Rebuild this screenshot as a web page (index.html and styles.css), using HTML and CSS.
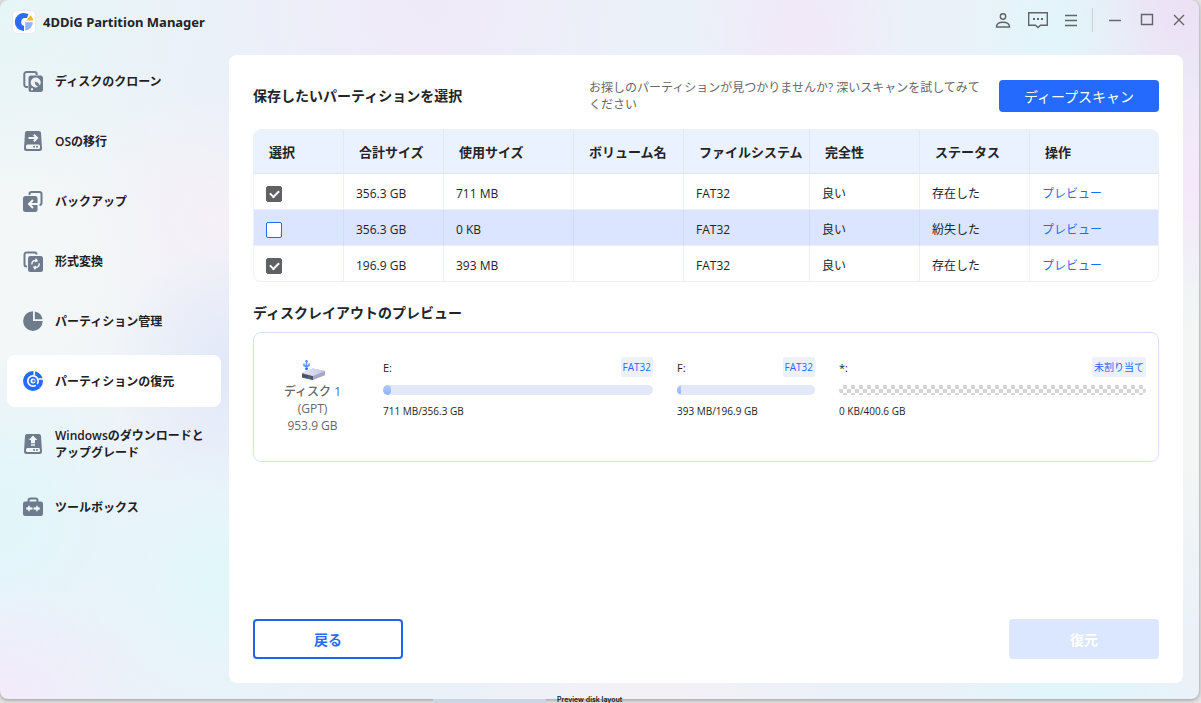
FILE: index.html
```html
<!DOCTYPE html>
<html lang="ja">
<head>
<meta charset="utf-8">
<meta name="viewport" content="width=device-width, initial-scale=1">
<title>4DDiG Partition Manager</title>
<link rel="stylesheet" href="styles.css">
</head>
<body>
<div class="window">
  <header class="titlebar">
    <svg class="logo" viewBox="0 0 24 24" aria-hidden="true">
      <rect x="0.5" y="0.5" width="23" height="23" rx="4" fill="#fdfdff" stroke="#ece9f2"/>
      <path d="M13 3.200a8.900 8.900 0 1 0-1 17.700v-5a4 4 0 0 1 .8-7.800h2.200l1.500-4.200z" fill="#2b6cf6"/>
      <path d="M13.200 12.200h7.600a8.500 8.500 0 0 1-7.600 8.400z" fill="#91b6fb"/>
      <path d="M14.500 10.500l3.800-5.300a8 8 0 0 1 2.900 5.300z" fill="#fbb61c"/>
    </svg>
    <h1 class="app-name">4DDiG Partition Manager</h1>
    <div class="title-actions">
      <button class="icon-button" aria-label="アカウント"><svg viewBox="0 0 20 20"><circle cx="10" cy="6.500" r="2.700"/><path d="M3.500 17c0-3.200 2.300-4.800 6.500-4.800s6.500 1.600 6.500 4.800z"/></svg></button>
      <button class="icon-button feedback" aria-label="フィードバック"><svg viewBox="0 0 20 20"><path d="M.7 2.700h18.600v12.600h-6.800L10 17.500l-2.500-2.200H.7z"/><path class="dots" d="M5 9h2M9 9h2M13 9h2"/></svg></button>
      <button class="icon-button" aria-label="メニュー"><svg viewBox="0 0 20 20"><path d="M4 5.500h12M4 10.500h12M4 15.500h12"/></svg></button>
      <span class="divider"></span>
      <button class="icon-button wide" aria-label="最小化"><svg viewBox="0 0 20 20"><path d="M4 10.500h12"/></svg></button>
      <button class="icon-button wide" aria-label="最大化"><svg viewBox="0 0 20 20"><path d="M4.500 4.500h11v10h-11z"/></svg></button>
      <button class="icon-button wide" aria-label="閉じる"><svg viewBox="0 0 20 20"><path d="M5 5l10 10M15 5L5 15"/></svg></button>
    </div>
  </header>

  <div class="body">
    <nav class="sidebar">
      <a class="nav-item" href="#clone">
        <svg viewBox="0 0 20 20"><path class="line" d="M5 16H3.500a2.200 2.200 0 0 1-2.200-2.200V3.200A2.200 2.200 0 0 1 3.500 1h8a2.200 2.200 0 0 1 2.200 2.200V4"/><rect x="5.500" y="4.500" width="14.500" height="16.500" rx="2.500"/><circle cx="12.700" cy="11.500" r="5" fill="#eef2f5"/><path d="M11.500 10.500l3.500 1.200 3.500 5.300-1.200 1-4.800-4.500z"/><path class="cut" d="M8 18.300h2"/></svg>
        <span>ディスクのクローン</span></a>
      <a class="nav-item" href="#migrate">
        <svg viewBox="0 0 20 20"><path d="M4 0h12a2 2 0 0 1 2 1.700L19 17.500a2.500 2.500 0 0 1-2.500 2.500h-13A2.500 2.500 0 0 1 1 17.500L2 1.700A2 2 0 0 1 4 0z"/><path class="cut" d="M5.500 7h8.500M10.800 3.700L14.200 7l-3.400 3.300"/><rect x="3" y="13.500" width="14" height="4.500" rx="1.500" fill="#f4f6f8"/><circle cx="11" cy="15.700" r="1"/><circle cx="14" cy="15.700" r="1"/></svg>
        <span>OSの移行</span></a>
      <a class="nav-item" href="#backup">
        <svg viewBox="0 0 20 20"><path class="line" d="M6.500 4V3a2 2 0 0 1 2-2h8a2 2 0 0 1 2 2v9a2 2 0 0 1-2 2"/><rect y="5" width="14.500" height="16" rx="2.500"/><path class="cut" d="M15 13H6M10 9l-4 4 4 4"/></svg>
        <span>バックアップ</span></a>
      <a class="nav-item" href="#convert">
        <svg viewBox="0 0 20 20"><path class="line" d="M4 15.500h-.5a2 2 0 0 1-2-2v-10a2 2 0 0 1 2-2h8a2 2 0 0 1 2 2"/><rect x="5" y="5" width="15" height="16" rx="2.500"/><path class="cut thin" d="M8.800 13.500c0-3 2-4.500 5-4l-1.200-1.800M16.200 12.200c.2 3.200-2 4.800-5 4.300l1.200 1.900M13.800 9.500l-1.600 1.400M11.200 16.500l1.600-1.300"/></svg>
        <span>形式変換</span></a>
      <a class="nav-item" href="#manage">
        <svg viewBox="0 0 20 20"><path d="M10 .3v9.700h9.700A9.800 9.800 0 1 1 10 .3z"/><path d="M11.800.4a9.600 9.600 0 0 1 7.800 7.900h-7.800z"/></svg>
        <span>パーティション管理</span></a>
      <a class="nav-item active" href="#recover" aria-current="page">
        <svg viewBox="0 0 20 20"><circle class="ring" cx="10" cy="10" r="8"/><path class="gap" d="M11.300 0v4.500M15.500 8h5M15.500 16l3.500 3.500"/><circle class="lens" cx="10" cy="10" r="3.400"/><path class="lens" d="M12.600 12.500l3.900 5"/><circle cx="10.500" cy="10" r="1.200"/></svg>
        <span>パーティションの復元</span></a>
      <a class="nav-item tall" href="#windows">
        <svg viewBox="0 0 20 20"><path d="M4 0h12a2 2 0 0 1 2 1.700L19 17.500a2.500 2.500 0 0 1-2.500 2.500h-13A2.500 2.500 0 0 1 1 17.500L2 1.700A2 2 0 0 1 4 0z"/><path d="M10 1.500l4.300 4.500h-2.300v3.200H8V6H5.700zM8 10.200h4v1.500H8z" fill="#f1f7fa"/><rect x="3" y="14" width="14" height="4" rx="1.500" fill="#f1f7fa"/><circle cx="11" cy="16" r="1"/><circle cx="14" cy="16" r="1"/></svg>
        <span>Windowsのダウンロードとアップグレード</span></a>
      <a class="nav-item" href="#toolbox">
        <svg viewBox="0 0 20 20"><path class="line" d="M5.500 5V3.500a2 2 0 0 1 2-2h5a2 2 0 0 1 2 2V5"/><rect y="4.500" width="20" height="14.500" rx="2"/><path d="M3.500 10.700h1.300l1.200-2 1.200 2h5.600l1.200-2 1.200 2h1.300v1.600h-1.300l-1.200 2-1.200-2H7.200l-1.200 2-1.200-2H3.500z" fill="#eefafb" stroke="#eefafb" stroke-width="0.600"/><path d="M9.500 10h1v3h-1z"/></svg>
        <span>ツールボックス</span></a>
    </nav>

    <main class="panel">
      <div class="panel-head">
        <h2>保存したいパーティションを選択</h2>
        <p class="hint">お探しのパーティションが見つかりませんか? 深いスキャンを試してみてください</p>
        <button class="primary">ディープスキャン</button>
      </div>

      <div class="table-frame">
      <table class="partitions">
        <colgroup><col class="c-select"><col class="c-total"><col class="c-used"><col class="c-volume"><col class="c-fs"><col class="c-state"><col class="c-state"><col></colgroup>
        <thead>
          <tr><th>選択</th><th>合計サイズ</th><th>使用サイズ</th><th>ボリューム名</th><th>ファイルシステム</th><th>完全性</th><th>ステータス</th><th>操作</th></tr>
        </thead>
        <tbody>
          <tr><td><input type="checkbox" aria-label="356.3 GB FAT32" checked></td><td>356.3 GB</td><td>711 MB</td><td></td><td>FAT32</td><td>良い</td><td>存在した</td><td><a href="#preview1">プレビュー</a></td></tr>
          <tr class="selected"><td><input type="checkbox" aria-label="356.3 GB FAT32"></td><td>356.3 GB</td><td>0 KB</td><td></td><td>FAT32</td><td>良い</td><td>紛失した</td><td><a href="#preview2">プレビュー</a></td></tr>
          <tr><td><input type="checkbox" aria-label="196.9 GB FAT32" checked></td><td>196.9 GB</td><td>393 MB</td><td></td><td>FAT32</td><td>良い</td><td>存在した</td><td><a href="#preview3">プレビュー</a></td></tr>
        </tbody>
      </table>
      </div>

      <h2 class="layout-title">ディスクレイアウトのプレビュー</h2>
      <section class="disk-card">
        <div class="disk">
          <svg viewBox="0 0 24 20" aria-hidden="true">
            <defs><linearGradient id="drive-top" x1="0" x2="1"><stop offset="0" stop-color="#e6e8f2"/><stop offset="1" stop-color="#c3c9e4"/></linearGradient></defs>
            <path d="M1 13l11-4.500L24 11v4.200L12 20 1 17.500z" fill="#a5aacb"/>
            <path d="M1 13l11-4.500L24 11l-12 5z" fill="url(#drive-top)"/>
            <path d="M1 13.500l11 2.800V20L1 17.500z" fill="#4d5268"/>
            <path d="M7 16.500l2 .5v1.300l-2-.5z" fill="#e8482f"/>
            <path d="M5.500 9V1M3 3.500v2l2.500 1.300L8 5.500v-2M4.500 2l1-1.500 1 1.500" fill="none" stroke="#5b93f5" stroke-width="1.500"/>
            <circle cx="5.500" cy="8.800" r="1.400" fill="#2d6ff2"/>
          </svg>
          <span class="disk-name">ディスク 1</span>
          <span>(GPT)</span>
          <span>953.9 GB</span>
        </div>
        <div class="volume first">
          <div class="volume-head"><span>E:</span><span class="tag">FAT32</span></div>
          <div class="bar"><div class="fill" style="width:8px"></div></div>
          <div>711 MB/356.3 GB</div>
        </div>
        <div class="volume second">
          <div class="volume-head"><span>F:</span><span class="tag">FAT32</span></div>
          <div class="bar"><div class="fill" style="width:4px"></div></div>
          <div>393 MB/196.9 GB</div>
        </div>
        <div class="volume third">
          <div class="volume-head"><span>*:</span><span class="tag">未割り当て</span></div>
          <div class="bar unallocated"></div>
          <div>0 KB/400.6 GB</div>
        </div>
      </section>

      <div class="panel-foot">
        <button class="back">戻る</button>
        <button class="recover" disabled>復元</button>
      </div>
    </main>
  </div>
</div>
<div class="backdrop"><span class="backdrop-block"></span><span class="backdrop-text">Preview disk layout</span></div>
</body>
</html>
```
FILE: styles.css
```css
* { box-sizing: border-box; }

body {
  margin: 0;
  height: 100vh;
  display: flex;
  flex-direction: column;
  overflow: hidden;
  background: #e4e4e4;
  color: #222426;
  font: 12px/17px "Open Sans", "Noto Sans CJK JP", sans-serif;
}

h1, h2, p { margin: 0; }
a { color: #246bfd; text-decoration: none; }
button { font: inherit; cursor: pointer; }

.window {
  flex: 1;
  min-height: 0;
  margin-right: 2px;
  display: flex;
  flex-direction: column;
  border-radius: 8px;
  box-shadow: 0 1px 4px rgba(0, 0, 0, 0.35);
  background:
    radial-gradient(circle at 0 100%, #f3ebfa 0, rgba(243, 235, 250, 0) 130px),
    radial-gradient(circle at 0 520px, #e2f6fa 30px, rgba(226, 246, 250, 0) 170px),
    radial-gradient(circle at 225px 580px, #e2f7fa 20px, rgba(226, 247, 250, 0) 140px),
    radial-gradient(circle at 240px 370px, #e4e9f9 20px, rgba(228, 233, 249, 0) 130px),
    radial-gradient(circle at 215px 220px, #f6f0f7 0, rgba(246, 240, 247, 0) 130px),
    radial-gradient(circle at 0 0, #e6f6f6 0, rgba(230, 246, 246, 0) 210px),
    radial-gradient(circle at 0 270px, #f4f7f7 80px, rgba(244, 247, 247, 0) 260px),
    radial-gradient(circle at 1050px 30px, #e1f6fa 0, rgba(225, 246, 250, 0) 100px),
    radial-gradient(circle at 100% 180px, #f6e7fa 0, rgba(246, 231, 250, 0) 120px),
    radial-gradient(circle at 100% 0, #ece0f5 0, rgba(236, 224, 245, 0) 170px),
    radial-gradient(circle at 800px 30px, #f2e8f8 0, rgba(242, 232, 248, 0) 110px),
    radial-gradient(circle at 430px 0, #f0eaf8 0, rgba(240, 234, 248, 0) 220px),
    radial-gradient(circle at 100% 400px, #f3f6f4 60px, rgba(243, 246, 244, 0) 230px),
    radial-gradient(circle at 1070px 100%, #e0f6fa 20px, rgba(224, 246, 250, 0) 130px),
    radial-gradient(circle at 650px 100%, #f4f1f6 20px, rgba(244, 241, 246, 0) 190px),
    #ebf1f9;
}

.titlebar {
  height: 43px;
  flex: none;
  display: flex;
  align-items: center;
  padding: 1px 10px 0 12px;
}
.logo { width: 24px; height: 24px; }
.app-name {
  margin-left: 7px;
  font-family: "Noto Sans", sans-serif;
  font-size: 13px;
  font-weight: 700;
}
.title-actions {
  margin-left: auto;
  height: 38px;
  align-self: flex-start;
  display: flex;
  align-items: center;
  gap: 14px;
}
.icon-button {
  width: 20px;
  height: 20px;
  padding: 0;
  border: 0;
  background: none;
}
.icon-button svg {
  display: block;
  width: 100%;
  height: 100%;
  fill: none;
  stroke: #626468;
  stroke-width: 1.4;
}
.icon-button .dots { stroke-width: 2; }
.divider {
  width: 1px;
  height: 24px;
  margin: 0 -2px 0 -3px;
  background: #cfcdd3;
}
.icon-button.wide + .icon-button.wide { margin-left: -2px; }
.icon-button.feedback { margin: 0 -1px 0 1px; }

.body {
  flex: 1;
  min-height: 0;
  display: flex;
}

.sidebar {
  width: 229px;
  flex: none;
  display: flex;
  flex-direction: column;
  gap: 8px;
  padding: 12px 8px 0 7px;
}
.nav-item {
  min-height: 52px;
  display: flex;
  align-items: center;
  gap: 12px;
  padding: 0 8px 0 16px;
  border-radius: 8px;
  color: #1f2023;
  font-weight: 600;
}
.nav-item.tall { min-height: 58px; }
.nav-item svg {
  flex: none;
  width: 20px;
  height: 20px;
  overflow: visible;
  fill: #6e7b8c;
}
.nav-item .line { fill: none; stroke: #6e7b8c; stroke-width: 2; }
.nav-item .cut { fill: none; stroke: #f5f6f9; stroke-width: 2; }
.nav-item .thin { stroke-width: 1.5; }
.nav-item.active { background: #fff; }
.nav-item.active svg { fill: #246bfd; }
.nav-item .ring { fill: none; stroke: #246bfd; stroke-width: 4; }
.nav-item .gap { fill: none; stroke: #fff; stroke-width: 1.6; }
.nav-item .lens { fill: none; stroke: #246bfd; stroke-width: 1.8; }

.panel {
  flex: 1;
  min-width: 0;
  margin: 12px 16px 16px 0;
  padding: 24px;
  display: flex;
  flex-direction: column;
  border-radius: 8px;
  background: #fff;
}
h2 {
  font-size: 14px;
  line-height: 20px;
  font-weight: 600;
}
.panel-head {
  display: flex;
  align-items: center;
  margin-bottom: 16px;
}
.hint {
  width: 398px;
  margin-left: auto;
  color: #66686c;
}
.primary {
  width: 160px;
  height: 32px;
  margin-left: 12px;
  border: 0;
  border-radius: 4px;
  background: #246bfd;
  color: #fff;
  font-size: 14px;
}

.table-frame {
  overflow: hidden;
  border: 1px solid #ecf0fd;
  border-radius: 8px;
}
.partitions {
  width: 100%;
  table-layout: fixed;
  border-collapse: separate;
  border-spacing: 0;
}
.c-select { width: 90px; }
.c-total { width: 100px; }
.c-used { width: 130px; }
.c-volume { width: 110px; }
.c-fs { width: 126px; }
.c-state { width: 110px; }
.partitions th {
  height: 44px;
  padding: 2px 0 0 15px;
  border-right: 1px solid #dfe8fd;
  border-bottom: 1px solid #dbe5fc;
  background: #eaf1ff;
  font-size: 13px;
  font-weight: 600;
  text-align: left;
  white-space: nowrap;
}
.partitions td {
  height: 36px;
  padding: 4px 0 0 12px;
  border-right: 1px solid #ecf0fd;
  border-bottom: 1px solid #ecf0fd;
}
.partitions tr > :last-child { border-right: 0; }
.partitions tbody tr:last-child td { height: 35px; border-bottom: 0; }
.partitions .selected td {
  border-right-color: #d0dcfb;
  background: #dbe5ff;
}
.partitions input {
  appearance: none;
  display: block;
  width: 16px;
  height: 16px;
  margin: 0;
  border: 1px solid #246bfd;
  border-radius: 2px;
  background: #fff;
}
.partitions input:checked {
  display: grid;
  place-items: center;
  border-color: #606164;
  background: #606164;
}
.partitions input:checked::before {
  content: "";
  width: 7px;
  height: 4px;
  margin-bottom: 2px;
  border: solid #fff;
  border-width: 0 0 2px 2px;
  transform: rotate(-45deg);
}

.layout-title { margin: 21px 0 9px; }
.disk-card {
  min-height: 130px;
  display: flex;
  gap: 24px;
  padding: 24px 12px 24px 0;
  border: 1px solid #d6e2fb;
  border-radius: 8px;
}
.disk {
  width: 105px;
  flex: none;
  display: flex;
  flex-direction: column;
  align-items: center;
  padding: 3px 0 0 12px;
  color: #66686c;
}
.disk svg { width: 24px; height: 20px; margin-bottom: 3px; }
.disk-name { font-weight: 500; }
.volume {
  font-size: 10px;
  min-width: 0;
}
.first { flex: 270 1 0; }
.second { flex: 138 1 0; }
.third { flex: 307 1 0; }
.volume-head {
  display: flex;
  justify-content: space-between;
  align-items: center;
  font-size: 11px;
}
.tag {
  height: 20px;
  padding: 0 2px;
  border-radius: 2px;
  background: #edf1fe;
  color: #246bfd;
  font-size: 10px;
  line-height: 20px;
}
.bar {
  height: 10px;
  margin: 8px 0;
  overflow: hidden;
  border-radius: 5px;
  background: #e2e8f8;
}
.fill {
  height: 100%;
  border-radius: 5px;
  background: linear-gradient(#b3cafc, #8fb1fb);
}
.unallocated {
  background: repeating-conic-gradient(#d5d5da 0 25%, #fff 0 50%) 0 0 / 8px 8px;
}

.panel-foot {
  margin-top: auto;
  display: flex;
  justify-content: space-between;
}
.back, .recover {
  width: 150px;
  height: 40px;
  border: 2px solid #1f63ee;
  border-radius: 4px;
  background: #fff;
  color: #246bfd;
  font-size: 14px;
  font-weight: 600;
}
.recover {
  border: 0;
  background: #dbe6ff;
  color: #fff;
}

.backdrop {
  height: 4px;
  flex: none;
  display: flex;
  align-items: flex-end;
  gap: 11px;
  padding-left: 433px;
}
.backdrop-block {
  width: 113px;
  height: 4px;
  background: #ccd5e2;
}
.backdrop-text {
  color: #222;
  font: 600 7px/7px Inter, sans-serif;
}
```
